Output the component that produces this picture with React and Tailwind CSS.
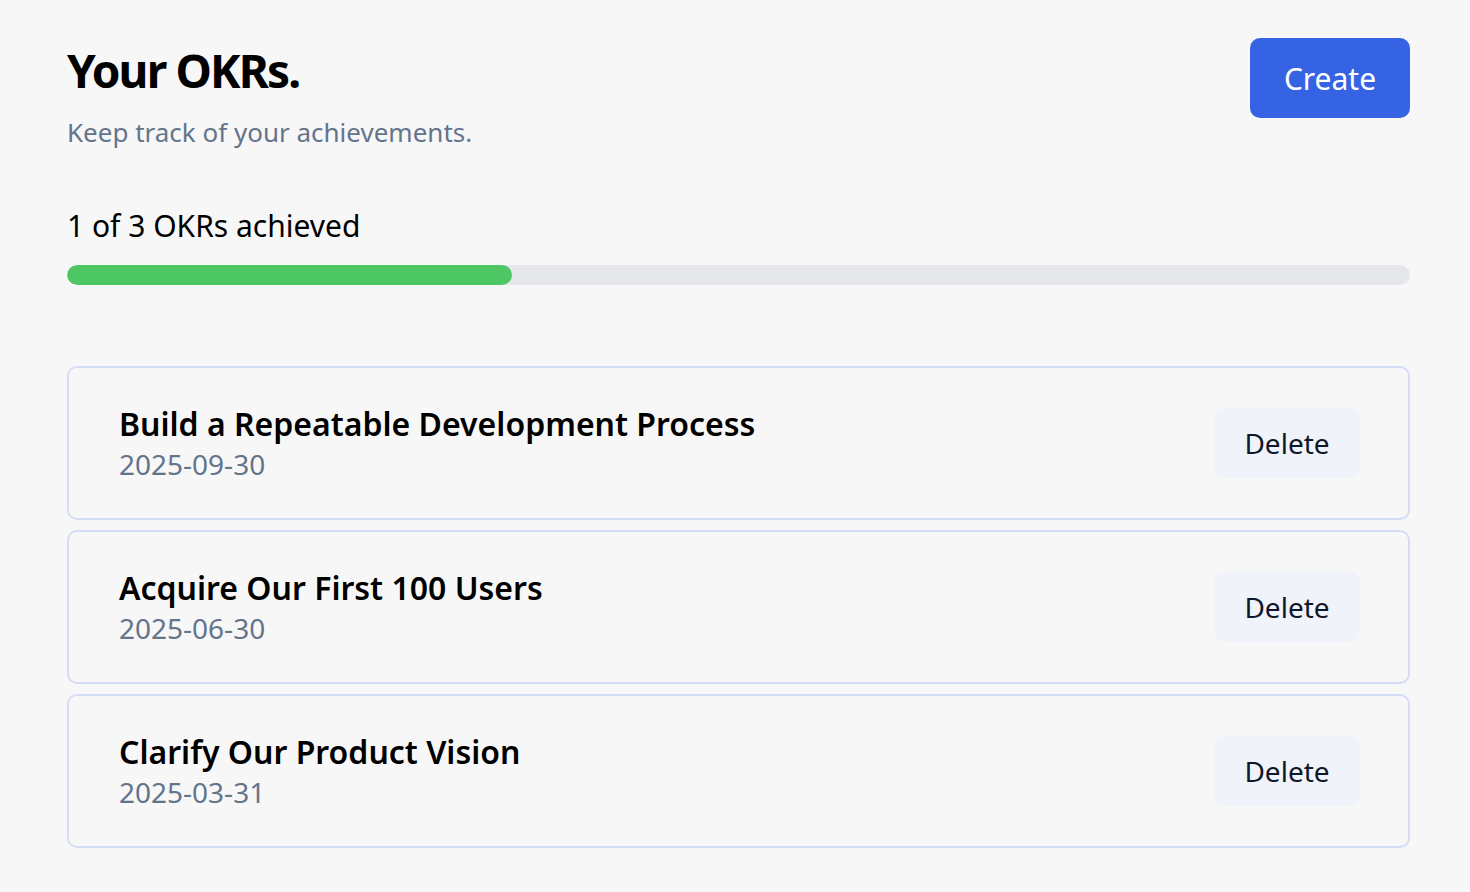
const okrs = [
  { title: 'Build a Repeatable Development Process', date: '2025-09-30' },
  { title: 'Acquire Our First 100 Users', date: '2025-06-30' },
  { title: 'Clarify Our Product Vision', date: '2025-03-31' },
];

export default function App() {
  return (
    <div className="min-h-screen bg-[#f7f7f7] pl-[67px] pr-[60px] pt-[38px] font-[family-name:Inter,'Liberation_Sans',sans-serif] text-[#111827]">
      <div className="flex items-start justify-between">
        <div>
          <h1 className="mt-[4px] text-[46px] font-bold leading-[56px] tracking-[-0.04em] text-black">Your OKRs.</h1>
          <p className="mt-[16px] text-[26px] leading-[36px] text-[#64748b]">Keep track of your achievements.</p>
        </div>
        <button className="h-[80px] w-[160px] rounded-[10px] bg-[#3563e4] text-[30px] text-white">Create</button>
      </div>
      <p className="mt-[56px] text-[30px] leading-[40px] text-black">1 of 3 OKRs achieved</p>
      <div className="mt-[19px] h-[20px] w-full overflow-hidden rounded-full bg-[#e5e7eb]">
        <div className="h-full rounded-full bg-[#4cc763]" style={{ width: '33.1%' }} />
      </div>
      <div className="mt-[81px] flex flex-col gap-[10px]">
        {okrs.map((o) => (
          <div key={o.title} className="flex h-[154px] items-center justify-between rounded-[10px] border-2 border-[#d4ddf5] pl-[50px] pr-[48px]">
            <div>
              <div className="text-[32px] font-semibold leading-[42px] text-black">{o.title}</div>
              <div className="text-[28px] leading-[38px] text-[#64748b]">{o.date}</div>
            </div>
            <button className="h-[70px] w-[146px] rounded-[10px] bg-[#f0f3f9] text-[28px] text-[#0f172a]">Delete</button>
          </div>
        ))}
      </div>
    </div>
  );
}
